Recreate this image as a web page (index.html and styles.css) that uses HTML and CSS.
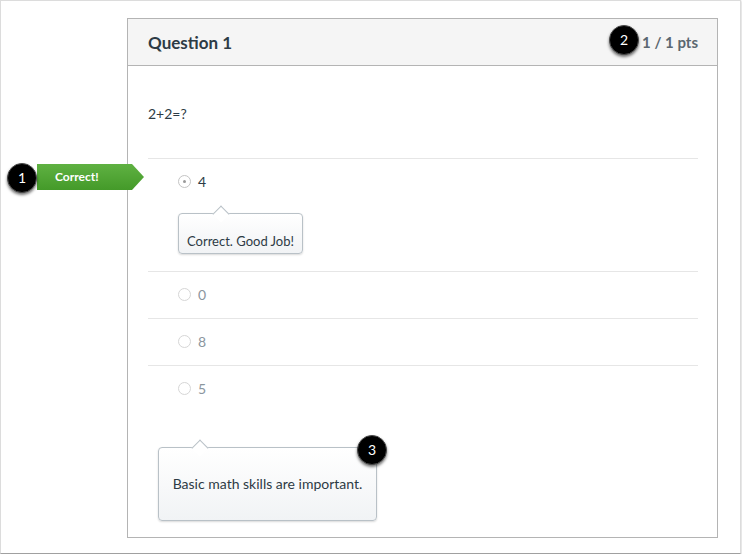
FILE: index.html
```html
<!DOCTYPE html>
<html>
<head>
<meta charset="utf-8">
<link rel="stylesheet" href="styles.css">
</head>
<body>
<div class="frame">
  <div class="card">
    <div class="card-header">
      <div class="q-title">Question 1</div>
      <div class="q-points">1 / 1 pts</div>
    </div>
    <div class="card-body">
      <div class="q-text">2+2=?</div>
      <div class="answer selected">
        <div class="answer-line"><span class="radio"></span><span class="answer-text">4</span></div>
        <div class="tip tip-small">Correct. Good Job!</div>
      </div>
      <div class="answer">
        <div class="answer-line"><span class="radio"></span><span class="answer-text">0</span></div>
      </div>
      <div class="answer">
        <div class="answer-line"><span class="radio"></span><span class="answer-text">8</span></div>
      </div>
      <div class="answer last">
        <div class="answer-line"><span class="radio"></span><span class="answer-text">5</span></div>
      </div>
      <div class="tip tip-general">Basic math skills are important.</div>
    </div>
  </div>

  <div class="correct-label">Correct!</div>
  <div class="badge badge-1">1</div>
  <div class="badge badge-2">2</div>
  <div class="badge badge-3">3</div>
</div>
</body>
</html>
```

FILE: styles.css
```css
* { box-sizing: border-box; }

html, body {
  margin: 0;
  padding: 0;
  background: #ffffff;
}

body {
  font-family: Lato, "Open Sans", "Liberation Sans", sans-serif;
  color: #2d3b45;
}

.frame {
  position: relative;
  width: 741px;
  height: 554px;
  border: 1px solid #dcdcdc;
  border-bottom-color: #a0a0a0;
  box-shadow: 0 1px 2px rgba(0, 0, 0, 0.3);
  padding: 17px 22px 14px 126px;
  display: flex;
  align-items: flex-start;
  background: #fff;
}

.card {
  flex: 1;
  border: 1px solid #b4b4b4;
  background: #fff;
}

.card-header {
  height: 47px;
  background: #f5f5f5;
  border-bottom: 1px solid #b4b4b4;
  display: flex;
  align-items: center;
  justify-content: space-between;
  padding: 0 19px 0 20px;
}

.q-title {
  font-size: 17px;
  font-weight: 700;
  color: #2d3b45;
}

.q-points {
  font-size: 15px;
  font-weight: 700;
  color: #5b6770;
}

.card-body {
  padding: 0 19px 16px 20px;
}

.q-text {
  margin: 38px 0 34px;
  font-size: 14px;
  line-height: 20px;
  color: #2d3b45;
}

.answer {
  border-top: 1px solid #e6e6e6;
  padding: 12px 0 14px 30px;
}

.answer.selected {
  padding-bottom: 17px;
}

.answer-line {
  display: flex;
  align-items: center;
  height: 20px;
}

.radio {
  width: 13px;
  height: 13px;
  border-radius: 50%;
  border: 1px solid #d6d6d6;
  background: #fff;
  margin-right: 7px;
  position: relative;
}

.selected .radio {
  border-color: #c4c4c4;
}

.selected .radio::after {
  content: "";
  position: absolute;
  left: 4px;
  top: 4px;
  width: 3px;
  height: 3px;
  border-radius: 50%;
  background: #9a9a9a;
}

.answer-text {
  font-size: 14px;
  color: #8b969e;
}

.selected .answer-text {
  color: #2d3b45;
}

.tip {
  position: relative;
  background: linear-gradient(#ffffff, #f1f3f5);
  border: 1px solid #b9c1c7;
  border-radius: 4px;
  box-shadow: 0 1px 2px rgba(0, 0, 0, 0.15);
  font-size: 13px;
  color: #2d3b45;
  text-align: center;
}

.tip::before {
  content: "";
  position: absolute;
  top: -6px;
  width: 11px;
  height: 11px;
  background: #fff;
  border-left: 1px solid #b9c1c7;
  border-top: 1px solid #b9c1c7;
  transform: rotate(45deg);
}

.tip-small {
  margin-top: 22px;
  width: 125px;
  height: 41px;
  padding-top: 18px;
  line-height: 18px;
}

.tip-small::before {
  left: 36px;
}

.tip-general {
  margin: 35px 0 0 10px;
  width: 219px;
  height: 74px;
  line-height: 72px;
  font-size: 14px;
}

.tip-general::before {
  left: 35px;
}

.correct-label {
  position: absolute;
  left: 36px;
  top: 163px;
  width: 107px;
  height: 26px;
  padding-left: 18px;
  line-height: 25px;
  font-size: 12px;
  font-weight: 700;
  color: #fff;
  background: linear-gradient(#5fb142, #449a29);
  clip-path: polygon(0 0, 95px 0, 107px 50%, 95px 100%, 0 100%);
}

.badge {
  position: absolute;
  width: 30px;
  height: 30px;
  border-radius: 50%;
  background: #000;
  border: 1px solid #4a4a4a;
  box-shadow: 0 2px 3px rgba(0, 0, 0, 0.55);
  color: #fff;
  font-size: 14px;
  line-height: 28px;
  text-align: center;
}

.badge-1 { left: 6px; top: 162px; }
.badge-2 { left: 608px; top: 24px; }
.badge-3 { left: 356px; top: 434px; }
```
